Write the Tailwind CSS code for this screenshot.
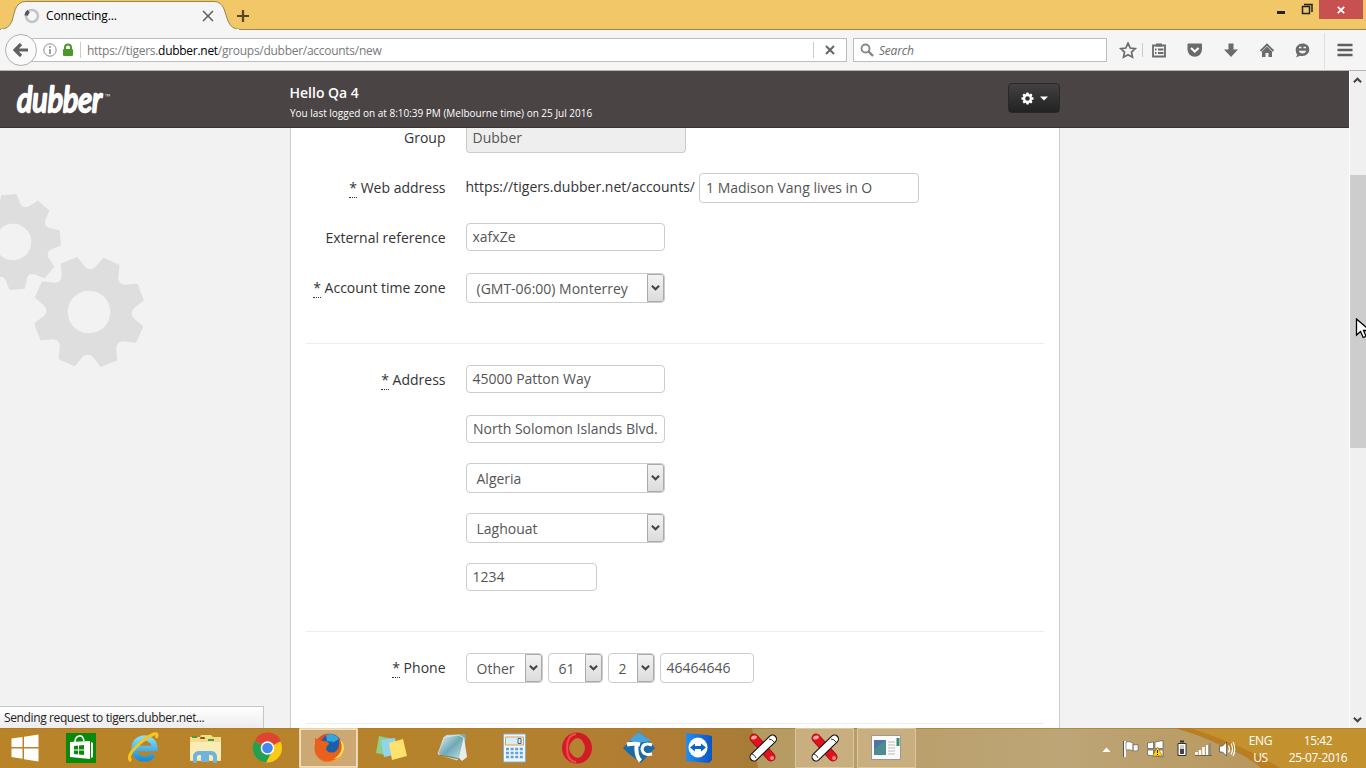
<!DOCTYPE html>
<html lang="en">
<head>
<meta charset="utf-8">
<title>Connecting...</title>
<script src="https://cdn.jsdelivr.net/npm/@tailwindcss/browser@4"></script>
</head>
<body class="w-[1366px] h-[768px] overflow-hidden flex flex-col bg-[#f2f2f2] font-['Open_Sans',sans-serif] text-sm text-[#333]">

<!-- shared symbols -->
<svg class="hidden">
  <symbol id="chev" viewBox="0 0 10 8"><path d="M1 1.500L5 5.500l4-4" fill="none" stroke="#444" stroke-width="2.300"/></symbol>
  <symbol id="tooth8" viewBox="-60 -60 120 120" overflow="visible">
    <path id="tt" d="M-19-38Q-13-41-12-46L-9-56H9L12-46Q13-41 19-38Z"/>
    <use href="#tt" transform="rotate(45)"/><use href="#tt" transform="rotate(90)"/><use href="#tt" transform="rotate(135)"/><use href="#tt" transform="rotate(180)"/><use href="#tt" transform="rotate(225)"/><use href="#tt" transform="rotate(270)"/><use href="#tt" transform="rotate(315)"/>
    <circle r="32" fill="none" stroke="currentColor" stroke-width="21"/>
  </symbol>
  <symbol id="scroll" viewBox="0 0 30 30">
    <path d="M6 5L23 24" stroke="#8d1015" stroke-width="9" stroke-linecap="round"/><path d="M6 5L23 24" stroke="#e3121c" stroke-width="7.500" stroke-linecap="round"/>
    <path d="M9 8.500L21 21.500" stroke="#e3121c" stroke-width="6"/>
    <ellipse cx="6" cy="4.500" rx="3" ry="1.800" fill="#f9a5a5" transform="rotate(-20 6 4.500)"/><circle cx="24" cy="25" r="2" fill="#f58b8b"/>
    <path d="M24.500 6L6 24" stroke="#111" stroke-width="9" stroke-linecap="round"/><path d="M24.500 6L6 24" stroke="#fff" stroke-width="6.800" stroke-linecap="round"/>
    <path d="M21 6q3 0 5 3M4 21q3 1 4 4" stroke="#333" fill="none"/>
  </symbol>
</svg>

<!-- title bar -->
<header class="relative h-[30px] shrink-0 flex items-start bg-[#f1c767] border-b border-[#9c854f]">
  <svg class="absolute left-0 top-0" width="240" height="30"><path d="M0 29.500Q9 29 12 21L15 10Q18 1.500 26 1.500H214Q221 1.500 224 9L228 21Q231 29 240 29.500V30H0z" fill="#f5f5f5" stroke="#9c854f"/><path d="M1 30H239" stroke="#f5f5f5" stroke-width="2"/></svg>
  <div class="relative flex items-center h-8 pl-6 w-[219px]">
    <svg width="16" height="16" viewBox="0 0 16 16" class="shrink-0"><circle cx="8" cy="8" r="6" fill="none" stroke="#c4c4c4" stroke-width="2.500"/><path d="M2.200 7.500a6 6 0 0 1 2.500-4.300" fill="none" stroke="#555" stroke-width="3.800"/></svg>
    <span class="ml-1.5 text-[12px] text-black tracking-[-0.15px] grow">Connecting...</span>
    <svg width="12" height="12" viewBox="0 0 12 12" class="mr-[5px]"><path d="M1 1l10 10M11 1L1 11" stroke="#555" stroke-width="1.400"/></svg>
  </div>
  <svg width="14" height="14" class="relative ml-[17px] mt-[9px]"><path d="M7 1v12M1 7h12" stroke="#554728" stroke-width="2.200"/></svg>
  <div class="ml-auto flex pr-[3px]">
    <svg width="50" height="20"><path d="M8 12.500h8" stroke="#222" stroke-width="3"/><path d="M33.500 6.500h7v7h-7zM35 4.500h8v7.500" fill="none" stroke="#222" stroke-width="1.500"/></svg>
    <div class="w-[44px] h-[19px] bg-[#c75050] flex items-center justify-center"><svg width="8" height="8"><path d="M.8 .8l6.400 6.400M7.200 .8L.8 7.200" stroke="#fff" stroke-width="1.800"/></svg></div>
  </div>
</header>

<!-- navigation toolbar -->
<nav class="h-[41px] shrink-0 bg-[#f5f5f5] border-b border-[#b5b5b5] flex items-center text-[12px]">
  <div class="relative z-10 ml-[5px] size-8 rounded-full border border-[#b0b0b0] bg-[#fafafa] flex items-center justify-center shrink-0">
    <svg width="16" height="14" viewBox="0 0 16 14"><path d="M8 1L2 7l6 6M2.500 7H15" fill="none" stroke="#606060" stroke-width="3.200"/></svg>
  </div>
  <div class="-ml-[7px] w-[817px] h-6 bg-white border border-[#bdbdbd] flex items-center pl-3">
    <svg width="14" height="14"><circle cx="7" cy="7" r="6.200" fill="none" stroke="#8c8c8c"/><path d="M7 6v5" stroke="#8c8c8c" stroke-width="1.600"/><circle cx="7" cy="4" r="1" fill="#8c8c8c"/></svg>
    <svg width="12" height="14" class="ml-[5px]"><path d="M3 7V4.500a3 3 0 0 1 6 0V7" fill="none" stroke="#4a9a28" stroke-width="2"/><rect x="1" y="6" width="10" height="7" rx="1" fill="#4a9a28"/></svg>
    <div class="ml-1.5 w-px h-4 bg-[#ccc]"></div>
    <span class="ml-[6px] pt-0.5 text-[#7a7a7a] tracking-[-0.28px] whitespace-nowrap text-[12px]">https://tigers.<span class="text-black">dubber.net</span>/groups/dubber/accounts/new</span>
    <div class="ml-auto w-[33px] h-4 border-l border-[#ccc] flex items-center justify-center"><svg width="10" height="10"><path d="M1 1l8 8M9 1L1 9" stroke="#666" stroke-width="2"/></svg></div>
  </div>
  <div class="ml-[6px] w-[254px] h-6 bg-white border border-[#bdbdbd] flex items-center pl-[6px]">
    <svg width="14" height="14"><circle cx="5.500" cy="5.500" r="4" fill="none" stroke="#858585" stroke-width="1.800"/><path d="M8.500 8.500L13 13" stroke="#858585" stroke-width="2.400"/></svg>
    <span class="ml-[5px] pt-0.5 italic text-[#6c6c6c] tracking-[-0.2px]">Search</span>
  </div>
  <svg width="259" height="40" viewBox="1107 30 259 40" fill="none" stroke="#6b6b6b">
    <path d="M1128 43.200l2.200 4.800 5 .6-3.700 3.500 1 5.100-4.500-2.500-4.500 2.500 1-5.100-3.700-3.500 5-.6z" stroke-width="1.700"/>
    <path d="M1142.500 43v14" stroke="#ccc"/>
    <path d="M1153 45.500h12v11h-12zM1155 49.500h1.500M1158 49.500h5.500M1155 53h1.500M1158 53h5.500" stroke-width="1.800"/><path d="M1156 43.500h6v3h-6z" fill="#6b6b6b" stroke="none"/>
    <path d="M1187.500 44.500q0-1 1-1h12.500q1 0 1 1v5a7.200 7.200 0 0 1-14.500 0z" fill="#6b6b6b" stroke="none"/><path d="M1191 48l3.800 3.600 3.800-3.600" stroke="#fff" stroke-width="2"/>
    <path d="M1228.500 43.500h5v6h4.500l-7 7.500-7-7.500h4.500z" fill="#6b6b6b" stroke="none"/>
    <path d="M1260.500 51l6.500-6.500 6.500 6.500" stroke-width="1.800"/><path d="M1262 51.500l5-5 5 5v5.500h-3.500v-4h-3v4h-3.500z" fill="#6b6b6b" stroke="none"/>
    <path d="M1302.500 43.500c4 0 6.800 2.500 6.800 6s-2.800 6.500-6.800 6.500q-1.500 0-2.500-.3l-4 1.800 1.300-3q-1.600-1.700-1.600-4.500c0-3.500 2.800-6.500 6.800-6.500z" fill="#6b6b6b" stroke="none"/><path d="M1299 47.500h2.500M1303.500 47.500h2.500" stroke="#f5f5f5" stroke-width="1.500"/><path d="M1298.800 50.800h7.400q-.8 2.700-3.700 2.700t-3.700-2.700z" fill="#f5f5f5" stroke="none"/>
    <path d="M1324.500 33v36" stroke="#e0e0e0"/>
    <path d="M1337.500 45h15M1337.500 50h15M1337.500 55h15" stroke-width="2.600" stroke="#5f5f5f"/>
  </svg>
</nav>

<!-- page viewport -->
<main class="relative h-[657px] shrink-0 flex overflow-hidden">
  <div class="relative w-[1349px] flex flex-col">
    <div class="h-[57px] shrink-0 bg-[#4a4445] border-b border-[#383233] flex text-white">
      <div class="w-[290px] pl-4 pt-2 flex items-start">
        <svg width="89" height="40" class="overflow-visible"><text x="1" y="33" font-family="Lato" font-weight="400" font-style="italic" font-size="34" textLength="85" lengthAdjust="spacingAndGlyphs" fill="#fff" stroke="#fff" stroke-width="2.300" stroke-linejoin="round" stroke-linecap="round">dubber</text></svg>
        <span class="text-[7px] leading-[8px] mt-[14px] text-[#ddd]">™</span>
      </div>
      <div class="w-[770px] flex justify-between pt-3">
        <div>
          <div class="text-[14px] leading-5 font-semibold -ml-[0.5px]">Hello Qa 4</div>
          <div class="text-[10px] leading-[14px] mt-[3px] tracking-[-0.005px] whitespace-nowrap">You last logged on at 8:10:39 PM (Melbourne time) on 25 Jul 2016</div>
        </div>
        <div class="w-[52px] h-[30px] rounded-[4px] bg-linear-to-b from-[#424242] to-[#222] border border-[#2a2727] flex items-center justify-center gap-1.5">
          <svg width="13" height="13" viewBox="-60 -60 120 120" fill="#fff" class="text-white"><use href="#tooth8" x="-60" y="-60" width="120" height="120"/></svg>
          <svg width="8" height="5"><path d="M0 .5h8L4 4.500z" fill="#fff"/></svg>
        </div>
      </div>
    </div>

    <div class="relative grow flex overflow-hidden">
      <div class="w-[290px] relative shrink-0">
        <svg width="290" height="300" fill="#dedede" class="text-[#dedede]">
          <g transform="translate(13 114) rotate(-5) scale(.85)"><use href="#tooth8" x="-60" y="-60" width="120" height="120"/></g>
          <g transform="translate(89 184) rotate(24) scale(.99)"><use href="#tooth8" x="-60" y="-60" width="120" height="120"/></g>
        </svg>
      </div>
      <!-- account form -->
      <form class="w-[770px] bg-white border-x border-[#ccc] px-[15px] flex flex-col">
        <div class="h-[25px] flex gap-5 shrink-0">
          <label class="w-[140px] text-right leading-5 pr-[0.5px]">Group</label>
          <div class="w-[220px] bg-[#eee] border border-t-0 border-[#ccc] rounded-b-[4px] px-[5.5px] leading-5 text-[#555]">Dubber</div>
        </div>
        <div class="h-[30px] mt-5 flex gap-5 items-center shrink-0">
          <label class="w-[140px] text-right pr-[0.5px]"><abbr class="no-underline border-b border-dotted border-[#333]">*</abbr> Web address</label>
          <div class="flex items-center"><span class="w-[233px] leading-[26px] -mt-0.5 -ml-[0.5px] mr-[0.5px]">https://tigers.dubber.net/accounts/</span><div class="w-[220px] h-[30px] border border-[#ccc] rounded-[4px] px-1.5 leading-7 text-[#555]">1 Madison Vang lives in O</div></div>
        </div>
        <div class="h-[28px] mt-5 flex gap-5 items-center shrink-0">
          <label class="w-[140px] text-right pt-0.5 pr-[0.5px]">External reference</label>
          <div class="w-[199px] h-[28px] border border-[#ccc] rounded-[4px] px-[5.5px] leading-[26px] text-[#555]">xafxZe</div>
        </div>
        <div class="h-[30px] mt-[22px] flex gap-5 items-center shrink-0">
          <label class="w-[140px] text-right whitespace-nowrap pr-[0.5px]"><abbr class="no-underline border-b border-dotted border-[#333]">*</abbr> Account time zone</label>
          <div class="w-[199px] h-[30px] border border-[#ccc] rounded-[4px] flex overflow-hidden text-[#555]"><span class="grow pl-[9.5px] leading-[30px] whitespace-nowrap">(GMT-06:00) Monterrey</span><span class="w-[17px] shrink-0 border border-[#aaa] rounded-r-[3px] bg-linear-to-b from-[#f2f2f2] to-[#dcdcdc] flex items-center justify-center"><svg width="9" height="8"><use href="#chev"/></svg></span></div>
        </div>
        <div class="h-px mt-10 shrink-0 bg-[#eee]"></div>
        <div class="h-[28px] mt-[21px] flex gap-5 items-center shrink-0">
          <label class="w-[140px] text-right pt-0.5 pr-[0.5px]"><abbr class="no-underline border-b border-dotted border-[#333]">*</abbr> Address</label>
          <div class="w-[199px] h-[28px] border border-[#ccc] rounded-[4px] px-[5.5px] leading-[26px] text-[#555]">45000 Patton Way</div>
        </div>
        <div class="h-[28px] mt-[22px] ml-40 w-[199px] border border-[#ccc] rounded-[4px] px-1.5 leading-[26px] text-[#555] whitespace-nowrap shrink-0">North Solomon Islands Blvd.</div>
        <div class="h-[30px] mt-5 ml-40 w-[199px] border border-[#ccc] rounded-[4px] flex overflow-hidden text-[#555] shrink-0"><span class="grow pl-[9.5px] leading-[30px]">Algeria</span><span class="w-[17px] shrink-0 border border-[#aaa] rounded-r-[3px] bg-linear-to-b from-[#f2f2f2] to-[#dcdcdc] flex items-center justify-center"><svg width="9" height="8"><use href="#chev"/></svg></span></div>
        <div class="h-[30px] mt-5 ml-40 w-[199px] border border-[#ccc] rounded-[4px] flex overflow-hidden text-[#555] shrink-0"><span class="grow pl-[9.5px] leading-[30px]">Laghouat</span><span class="w-[17px] shrink-0 border border-[#aaa] rounded-r-[3px] bg-linear-to-b from-[#f2f2f2] to-[#dcdcdc] flex items-center justify-center"><svg width="9" height="8"><use href="#chev"/></svg></span></div>
        <div class="h-[28px] mt-5 ml-40 w-[131px] border border-[#ccc] rounded-[4px] px-[5.5px] leading-[26px] text-[#555] shrink-0">1234</div>
        <div class="h-px mt-10 shrink-0 bg-[#eee]"></div>
        <div class="h-[30px] mt-[21px] flex items-center shrink-0">
          <label class="w-[140px] mr-5 text-right pr-[0.5px]"><abbr class="no-underline border-b border-dotted border-[#333]">*</abbr> Phone</label>
          <div class="w-[77px] h-[30px] border border-[#ccc] rounded-[4px] flex overflow-hidden text-[#555]"><span class="grow pl-[9.5px] leading-[30px]">Other</span><span class="w-[17px] shrink-0 border border-[#aaa] rounded-r-[3px] bg-linear-to-b from-[#f2f2f2] to-[#dcdcdc] flex items-center justify-center"><svg width="9" height="8"><use href="#chev"/></svg></span></div>
          <div class="ml-[5px] w-[55px] h-[30px] border border-[#ccc] rounded-[4px] flex overflow-hidden text-[#555]"><span class="grow pl-[9.5px] leading-[30px]">61</span><span class="w-[17px] shrink-0 border border-[#aaa] rounded-r-[3px] bg-linear-to-b from-[#f2f2f2] to-[#dcdcdc] flex items-center justify-center"><svg width="9" height="8"><use href="#chev"/></svg></span></div>
          <div class="ml-[5px] w-[47px] h-[30px] border border-[#ccc] rounded-[4px] flex overflow-hidden text-[#555]"><span class="grow pl-[9.5px] leading-[30px]">2</span><span class="w-[17px] shrink-0 border border-[#aaa] rounded-r-[3px] bg-linear-to-b from-[#f2f2f2] to-[#dcdcdc] flex items-center justify-center"><svg width="9" height="8"><use href="#chev"/></svg></span></div>
          <div class="ml-[5px] w-[94px] h-[30px] border border-[#ccc] rounded-[4px] px-[5.5px] leading-7 text-[#555]">46464646</div>
        </div>
        <div class="h-px mt-10 shrink-0 bg-[#eee]"></div>
      </form>
    </div>
    <!-- status bubble -->
    <div class="absolute left-0 bottom-0 w-[264px] h-[22px] border-t border-r border-[#c6c6c6] bg-linear-to-b from-white to-[#ececec] pl-1 leading-[21px] text-[12px] text-[#222] tracking-[-0.38px] whitespace-nowrap">Sending request to tigers.dubber.net...</div>
  </div>
  <!-- scrollbar -->
  <div class="w-[17px] bg-[#f0f0f0] border-l border-white flex flex-col items-center">
    <svg width="9" height="8" class="mt-[5px] -ml-px rotate-180"><use href="#chev"/></svg>
    <div class="mt-[91px] w-4 h-[273px] bg-[#cdcdcd]"></div>
    <svg width="9" height="8" class="mt-auto mb-1 -ml-px"><use href="#chev"/></svg>
  </div>
  <svg class="absolute left-[1355px] top-[247px]" width="11" height="22"><path d="M1.500 1v16l4-3.500 2.700 6 2.800-1.200-2.500-5.800H15z" fill="#fff" stroke="#000" stroke-width="1.300"/></svg>
</main>

<!-- taskbar -->
<footer class="relative h-10 shrink-0 text-white text-[12px]">
  <svg width="1366" height="40" viewBox="0 728 1366 40">
    <defs>
      <linearGradient id="tb"><stop offset="0" stop-color="#b98328"/><stop offset=".35" stop-color="#b5822d"/><stop offset=".49" stop-color="#b07c35"/><stop offset=".545" stop-color="#a87c37"/></linearGradient>
      <linearGradient id="tan"><stop offset="0" stop-color="#b59a60"/><stop offset=".6" stop-color="#bda577"/><stop offset="1" stop-color="#b8975c"/></linearGradient>
      <linearGradient id="fx" x2="1" y2="1"><stop offset="0" stop-color="#e23b1e"/><stop offset=".6" stop-color="#ee6b1e"/><stop offset="1" stop-color="#ffd43a"/></linearGradient>
      <linearGradient id="ie" x2="0" y2="1"><stop offset="0" stop-color="#7fdcfb"/><stop offset="1" stop-color="#1b8fd6"/></linearGradient>
      <linearGradient id="tv" x2="1"><stop offset="0" stop-color="#1f8ff5"/><stop offset="1" stop-color="#0b55c4"/></linearGradient>
      <linearGradient id="np" x2="1" y2="1"><stop offset="0" stop-color="#e8f7fa"/><stop offset=".5" stop-color="#6fa9b5"/><stop offset="1" stop-color="#c9e6ea"/></linearGradient>
    </defs>
    <path d="M0 728h1366v40H0z" fill="url(#tb)"/>
    <path d="M752 728h430l90 40H758z" fill="url(#tan)"/><path d="M1175 728h191v40h-105q-25-22-86-40z" fill="#c3922f"/><path d="M1175 728h15q55 18 90 40h-19q-25-22-86-40z" fill="#b87e20"/>
    <path d="M0 728.500h1366" stroke="#a77a2b" opacity=".6"/>
    <!-- start -->
    <path d="M11.500 738.500l11-1.600v10.100h-11zM24 736.700l14.500-2.200V747H24zM11.500 748.500h11v10.200l-11-1.600zM24 748.500h14.500v13l-14.500-2.200z" fill="#fff"/>
    <!-- store -->
    <path d="M66 733h30v30H66z" fill="#0a8a0c"/><path d="M70 742l20-1v18l-20-2zM91 742l2 1v14l-2 1z" fill="#fff"/><path d="M75 742q0-5 4-6t5 5" fill="none" stroke="#fff" stroke-width="1.600"/><path d="M74 746l4-.4v3.900h-4zM79 745.500l5-.5v4.500h-5zM74 750.500h4v4l-4-.4zM79 750.500h5v4.600l-5-.5z" fill="#0a8a0c"/>
    <!-- internet explorer -->
    <path d="M135 748.500h20a10.500 10.500 0 1 0-1.800 6" fill="none" stroke="url(#ie)" stroke-width="5.500"/>
    <path d="M131 761q-5-4 5-14 10-10 18-13 5-1 2 4" fill="none" stroke="#f5c521" stroke-width="3"/>
    <!-- explorer -->
    <path d="M190 737h10l1-2h10l2 2h8v24h-31z" fill="#f1dc8c"/><path d="M190 742h31v18h-31z" fill="#f9edb5"/><path d="M192 737h5M200 738h5M208 740h6" stroke-width="2" stroke="#4a9d3b"/><path d="M201 738h3" stroke="#c23b24" stroke-width="2"/>
    <path d="M195 763v-7q1-3 4-3h12q3 0 4 3v7M203 762v-5h4v5" fill="none" stroke="#71b3de" stroke-width="4"/>
    <!-- chrome -->
    <circle cx="267.500" cy="748" r="14.500" fill="#fbc916"/><path d="M267.500 748L254.500 741a14.500 14.500 0 0 1 26.500 0z" fill="#df4332"/><path d="M267.500 748l-13-7a14.500 14.500 0 0 0 11.500 21.500l6-11z" fill="#25a050"/><circle cx="267.500" cy="748" r="6.800" fill="#fff"/><circle cx="267.500" cy="748" r="5.300" fill="#4587f0"/>
    <!-- firefox, active task -->
    <path d="M300 729h57v38h-57z" fill="#cda873" stroke="#fbf0d8" stroke-width="1.500"/>
    <circle cx="329" cy="748" r="14.500" fill="url(#fx)"/><circle cx="331" cy="744" r="10" fill="#1c5fa8"/><path d="M326 735q8-3 13 4l-5 3-7-1z" fill="#35a5dc"/><path d="M315 738q4 2 8 3 6 0 6 3-3 2-3 5 2 5 9 3 5-3 4-12 7 8 1 16-6 6-14 5-10-2-11-12z" fill="#e9601c"/><path d="M339 739q4 5 2 12-3 6-8 8 10-1 11-11 0-6-5-9z" fill="#ffdf4d"/>
    <!-- sticky notes -->
    <path d="M379 736l14 3-3 17-14-3z" fill="#8fcf8a"/><path d="M381 740l14-2 3 16-14 3z" fill="#93d3ec"/><path d="M389 743l14-4 4 17-15 4z" fill="#ffe26d"/>
    <!-- notepad -->
    <path d="M446 735l20-1-3 26-22-5z" fill="url(#np)"/><path d="M438 754l6-17 15-2 5 3-4 19-3 3z" fill="url(#np)" stroke="#dff1f3" stroke-width=".7"/><path d="M459 758l5-21 3 20-5 4z" fill="#e8ecec"/><path d="M440 755l20 4" stroke="#7b5a1a" opacity=".7"/>
    <!-- calculator -->
    <path d="M503.500 734h22v28h-22z" fill="#eef6fc" stroke="#7fb0d6"/><path d="M505.500 737h18v8h-18z" fill="#d9ecfa" stroke="#e0a247"/><path d="M518 738.500h3v5h-3z" fill="none" stroke="#3e6793"/><path d="M506 749h17M506 753h17M506 757h17" stroke="#63a0d4" stroke-width="2.600" stroke-dasharray="3 1.600"/>
    <!-- opera -->
    <ellipse cx="577" cy="748" rx="11.500" ry="12" fill="none" stroke="#d31b25" stroke-width="7"/><path d="M576 734q-9 1-9 14t9 14" fill="none" stroke="#f2474d" stroke-width="2"/><ellipse cx="577.500" cy="748" rx="7" ry="10" fill="#b58232"/>
    <!-- teamcity -->
    <path d="M639 732l7 5 9 11-14 15-12-9-6-6z" fill="#1a6ba8"/><path d="M639 732l-10 8 8 3 14-2z" fill="#48a4dc"/><path d="M627 744.500q7-1.500 13 0M636.500 744q-1 12 4 17" stroke="#fff" stroke-width="4" fill="none"/><path d="M652 745q-9-3-10 4 1 7 10 5" stroke="#fff" stroke-width="3" fill="none"/>
    <!-- teamviewer -->
    <path d="M686 733l21 2 5 1v24l-3 3-23-2z" fill="url(#tv)"/><ellipse cx="698" cy="747.500" rx="9.500" ry="10" fill="#fff"/><path d="M690 747.500l5-4v2.500h6v-2.500l5 4-5 4V749h-6v2.500z" fill="#0c63c9"/>
    <!-- scroll tools -->
    <use href="#scroll" x="748" y="733" width="30" height="30"/>
    <path d="M795.500 728.500h58v39h-58z" fill="#c9af80" stroke="#dcc79b"/><use href="#scroll" x="810" y="733" width="30" height="30"/>
    <path d="M857.500 728.500h58v39h-58z" fill="#c9af80" stroke="#dcc79b"/>
    <path d="M871.500 735.500h29v24h-29z" fill="#fafafa" stroke="#999"/><path d="M874 740h12v15h-12z" fill="#4c8c92"/><path d="M874 740h12l-12 9z" fill="#5073a5"/><path d="M888 742h7M888 745h7M888 748h7M888 751h7M888 754h7" stroke="#bbb"/><path d="M896.500 738h3v8h-3z" fill="#3f8a6e"/>
    <!-- tray -->
    <path d="M1102.500 752l4-4.500 4 4.500z" fill="#fff"/>
    <path d="M1125 741v16" stroke="#fff" stroke-width="2"/><path d="M1123.500 741v16" stroke="#444" stroke-width=".8"/><path d="M1126 742q4-1 7 1v8q-3-2-7-1zM1133 744.500q3 1 5 0v6q-3 1-5 0z" fill="#fff" stroke="#555" stroke-width=".6"/>
    <path d="M1147.500 743l6-1v6.500h-6zM1155 742l8-1.500v8h-8zM1147.500 750h6v6l-6-1zM1155 750h8v7l-8-1z" fill="#fff" stroke="#444" stroke-width=".6"/><path d="M1157.500 747l5 9h-10z" fill="#ffd21f" stroke="#7a5b00" stroke-width=".5"/><path d="M1157.500 750v3M1157.500 754v1" stroke="#222"/>
    <path d="M1178 743.500h8v12h-8z" fill="#fff" stroke="#333"/><path d="M1180 741.500h4" stroke="#333" stroke-width="2"/><path d="M1180 745h4v4h-4z" fill="#ccc"/><path d="M1180 749h4v5h-4z" fill="#444"/>
    <path d="M1196.500 755v-3M1200 755v-5M1203.500 755v-8" stroke="#fff" stroke-width="2.500"/><path d="M1207 755v-10" stroke="#fff" stroke-width="2"/><path d="M1210 755v-12" stroke="#888" stroke-width="1.800"/><path d="M1195 755.500h17" stroke="#555" stroke-width=".8"/>
    <path d="M1219.500 746h3l4-4v14l-4-4h-3z" fill="#fff" stroke="#444" stroke-width=".7"/><path d="M1228.500 745.500q2 3.500 0 7M1231 743.500q3 5.500 0 11M1233 742q3.500 7 0 14" fill="none" stroke="#fff" stroke-width="1.200"/>
  </svg>
  <div class="absolute inset-y-0 right-0 flex pt-1 leading-[17px] text-center whitespace-nowrap">
    <div class="w-[45px] tracking-[-0.3px] mr-px">ENG<br>US</div>
    <div class="w-[68px] mr-[14px] tracking-[-0.4px]">15:42<br>25-07-2016</div>
  </div>
</footer>
</body>
</html>
